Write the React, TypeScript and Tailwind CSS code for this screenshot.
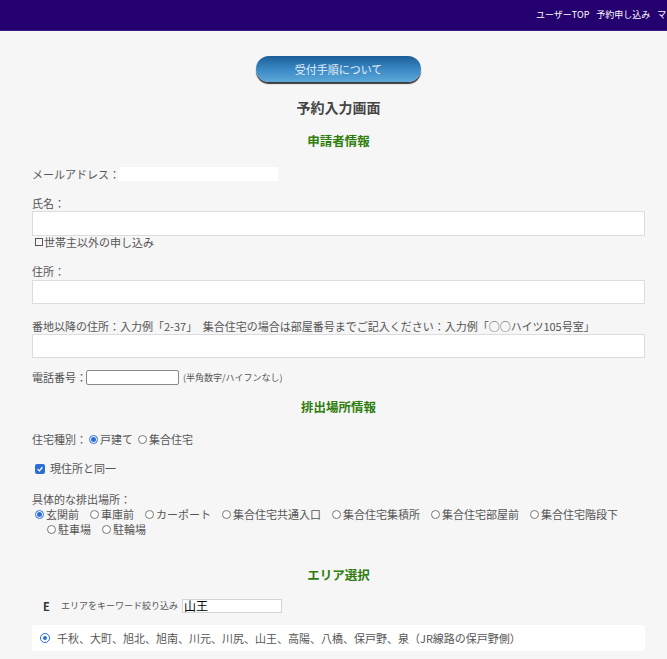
import React from 'react';

const font = { fontFamily: '"Noto Sans CJK JP", "Noto Sans", sans-serif' };

const Radio = ({ checked = false }: { checked?: boolean }) => (
  <span
    className={`inline-flex items-center justify-center w-[9px] h-[9px] rounded-full border bg-white shrink-0 ${
      checked ? 'border-[#2b6fd6]' : 'border-[#777]'
    }`}
  >
    {checked && <span className="w-[5px] h-[5px] rounded-full bg-[#2b6fd6]" />}
  </span>
);

const RadioItem = ({ label, checked = false }: { label: string; checked?: boolean }) => (
  <span className="inline-flex items-center gap-[2px] whitespace-nowrap">
    <Radio checked={checked} />
    {label}
  </span>
);

const SectionTitle = ({ children, className = '' }: { children: React.ReactNode; className?: string }) => (
  <h3 className={`text-center text-[12.5px] leading-[18px] font-bold text-[#2f7d0d] ${className}`}>{children}</h3>
);

const App = () => {
  const navItems = ['ユーザーTOP', '予約申し込み', 'マイページ'];
  const placesRow1 = ['玄関前', '車庫前', 'カーポート', '集合住宅共通入口', '集合住宅集積所', '集合住宅部屋前', '集合住宅階段下'];
  const placesRow2 = ['駐車場', '駐輪場'];

  return (
    <div className="min-h-[659px] bg-[#f6f6f6] text-[11px] text-[#555]" style={font}>
      <header className="h-[31px] bg-[#25006f] border-b border-[#3a1f80] flex items-center overflow-hidden">
        <nav className="flex gap-[7px] pl-[536px] whitespace-nowrap text-[9px] text-white">
          {navItems.map((item) => (
            <span key={item}>{item}</span>
          ))}
        </nav>
      </header>

      <main className="pl-[32px] pr-[22px] pt-[25px] pb-[10px]">
        <div className="flex justify-center">
          <button className="w-[165px] h-[26px] rounded-full bg-gradient-to-b from-[#1c5f98] via-[#3987c3] to-[#5ca8da] text-[11px] text-[#e3eef8] shadow-[0_2px_1px_#3a3a3a]">
            受付手順について
          </button>
        </div>

        <h2 className="mt-[15px] text-center text-[14px] leading-[20px] font-bold text-[#444]">予約入力画面</h2>

        <SectionTitle className="mt-[15px]">申請者情報</SectionTitle>

        <div className="mt-[17px] flex items-center h-[14px]">
          <span>メールアドレス：</span>
          <span className="-ml-[2px] w-[160px] h-[14px] bg-white" />
        </div>

        <div className="mt-[14px] leading-[16px]">氏名：</div>
        <div className="h-[25px] bg-white border border-[#dcdcdc]" />
        <div className="flex items-center leading-[12px] pl-[3px] gap-[1px]">
          <span className="w-[8px] h-[8px] border border-[#555]" />
          世帯主以外の申し込み
        </div>

        <div className="mt-[15px] leading-[16px]">住所：</div>
        <div className="mt-[1px] h-[24px] bg-white border border-[#dcdcdc]" />

        <div className="mt-[14px] leading-[16px]">
          番地以降の住所：入力例「2-37」　集合住宅の場合は部屋番号までご記入ください：入力例「○○ハイツ105号室」
        </div>
        <div className="h-[24px] bg-white border border-[#dcdcdc]" />

        <div className="mt-[12px] flex items-center h-[15px]">
          <span>電話番号：</span>
          <span className="-ml-[1px] w-[93px] h-[15px] bg-white border border-[#8a8a8a] rounded-[2px]" />
          <span className="ml-[4px] text-[9px]">(半角数字/ハイフンなし)</span>
        </div>

        <SectionTitle className="mt-[13px]">排出場所情報</SectionTitle>

        <div className="mt-[16px] flex items-center gap-[6px] leading-[15px]">
          <span>住宅種別：</span>
          <span className="flex items-center gap-[5px] -ml-[4px]">
            <RadioItem label="戸建て" checked />
            <RadioItem label="集合住宅" />
          </span>
        </div>

        <div className="mt-[14px] flex items-center gap-[5px] pl-[3px] leading-[15px]">
          <span className="w-[10px] h-[10px] rounded-[2px] bg-[#2b6fd6] flex items-center justify-center">
            <svg viewBox="0 0 10 10" className="w-[8px] h-[8px]">
              <path d="M2 5.2 L4.2 7.3 L8 2.8" fill="none" stroke="white" strokeWidth="1.6" />
            </svg>
          </span>
          現住所と同一
        </div>

        <div className="mt-[16px] leading-[15px]">具体的な排出場所：</div>
        <div className="flex gap-[11px] pl-[3px] leading-[15px] whitespace-nowrap">
          {placesRow1.map((p, i) => (
            <RadioItem key={p} label={p} checked={i === 0} />
          ))}
        </div>
        <div className="flex gap-[11px] pl-[15px] leading-[15px]">
          {placesRow2.map((p) => (
            <RadioItem key={p} label={p} />
          ))}
        </div>

        <SectionTitle className="mt-[29px]">エリア選択</SectionTitle>

        <div className="mt-[15px] flex items-center h-[14px] pl-[11px]">
          <span className="font-bold text-[#333] text-[11px] w-[18px]">E</span>
          <span className="text-[9px] mr-[4px]">エリアをキーワード絞り込み</span>
          <span className="w-[100px] h-[14px] bg-white border border-[#d4d4d4] flex items-center pl-[1px] text-[12px] text-black">
            山王
          </span>
        </div>

        <div className="mt-[12px] h-[26px] bg-white rounded-[3px] flex items-center pl-[8px] gap-[7px]">
          <span className="w-[10px] h-[10px] rounded-full border-[1.5px] border-[#2b6fd6] flex items-center justify-center">
            <span className="w-[4px] h-[4px] rounded-full bg-[#2b6fd6]" />
          </span>
          <span>千秋、大町、旭北、旭南、川元、川尻、山王、高陽、八橋、保戸野、泉（JR線路の保戸野側）</span>
        </div>
      </main>
    </div>
  );
};

export default App;
